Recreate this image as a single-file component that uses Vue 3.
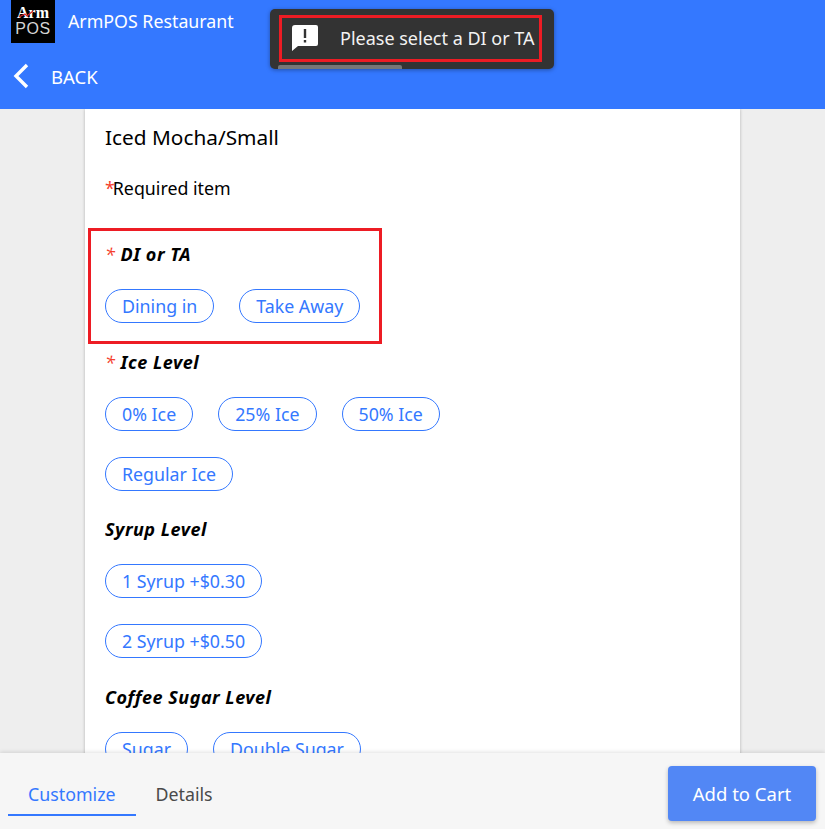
<script setup>
const groups = [
  { name: "DI or TA", required: true, options: ["Dining in", "Take Away"] },
  { name: "Ice Level", required: true, options: ["0% Ice", "25% Ice", "50% Ice", "Regular Ice"] },
  { name: "Syrup Level", required: false, options: ["1 Syrup +$0.30", "2 Syrup +$0.50"] },
  { name: "Coffee Sugar Level", required: false, options: ["Sugar", "Double Sugar"] },
];
</script>

<template>
  <div class="page">
    <header class="topbar">
      <div class="brand">
        <div class="logo">
          <span class="logo-arm">Arm</span>
          <span class="logo-pos">POS</span>
          <svg class="logo-tick" width="16" height="8" viewBox="0 0 16 8" fill="none">
            <path d="M1 7 L7 4 L9 6 L15 1" stroke="#d8232a" stroke-width="1.2" />
          </svg>
        </div>
        <span class="brand-name">ArmPOS Restaurant</span>
      </div>
      <div class="back">
        <svg width="18" height="26" viewBox="0 0 18 26" fill="none">
          <path d="M15 2 L4 13 L15 24" stroke="#fff" stroke-width="3.4" />
        </svg>
        <span>BACK</span>
      </div>
    </header>

    <main class="body">
      <section class="card">
        <h1 class="item-name">Iced Mocha/Small</h1>
        <p class="required-note"><span class="star">*</span>Required item</p>
        <div v-for="group in groups" :key="group.name" class="group">
          <h2 class="group-title">
            <span v-if="group.required" class="star">* </span>{{ group.name }}
          </h2>
          <div class="chips">
            <span v-for="opt in group.options" :key="opt" class="chip">{{ opt }}</span>
          </div>
        </div>
      </section>
    </main>

    <footer class="bottom">
      <div class="tabs">
        <span class="tab active">Customize</span>
        <span class="tab">Details</span>
      </div>
      <button class="add">Add to Cart</button>
    </footer>

    <div class="toast">
      <svg class="toast-icon" width="28" height="28" viewBox="0 0 28 28">
        <path
          d="M4 1 H25 A2 2 0 0 1 27 3 V20 A2 2 0 0 1 25 22 H7 L1 27 V4 A3 3 0 0 1 4 1 Z M12.8 5 V14 H15.2 V5 Z M12.8 16 V18.4 H15.2 V16 Z"
          fill="#fff"
          fill-rule="evenodd"
        />
      </svg>
      <span class="toast-text">Please select a DI or TA</span>
      <div class="toast-progress"></div>
      <div class="mark mark-toast"></div>
    </div>
    <div class="mark mark-group"></div>
  </div>
</template>

<style scoped>
.page {
  position: relative;
  display: flex;
  flex-direction: column;
  height: 829px;
  overflow: hidden;
  background: #eeeeee;
  font-family: "Noto Sans", "Open Sans", sans-serif;
}
.topbar {
  flex: none;
  height: 109px;
  background: #3478ff;
  color: #fff;
}
.brand {
  display: flex;
  align-items: flex-start;
  padding-left: 11px;
}
.logo {
  position: relative;
  width: 44px;
  height: 43px;
  background: #000;
  display: flex;
  flex-direction: column;
  align-items: center;
  gap: 3px;
  line-height: 13px;
  padding-top: 6px;
  box-sizing: border-box;
}
.logo-tick {
  position: absolute;
  left: 7px;
  top: 10px;
}
.logo-arm {
  font-family: "Liberation Serif", serif;
  font-weight: 700;
  font-size: 16px;
  color: #fff;
}
.logo-pos {
  font-family: "Liberation Sans", sans-serif;
  font-size: 16px;
  letter-spacing: 0.5px;
  color: #d4d4d4;
}
.brand-name {
  margin-left: 13px;
  font-size: 17.8px;
  line-height: 43px;
}
.back {
  display: flex;
  align-items: center;
  height: 26px;
  margin-top: 20px;
  padding-left: 12px;
  gap: 21px;
  font-size: 18.5px;
}
.body {
  flex: 1;
  min-height: 0;
  overflow: hidden;
  padding: 0 85px;
}
.card {
  height: 100%;
  background: #fff;
  padding: 14px 20px 0;
  box-shadow: 0 0 3px rgba(0, 0, 0, 0.25);
}
.item-name {
  margin: 0;
  font-size: 20.8px;
  font-weight: 400;
  line-height: 28px;
  color: #000;
}
.required-note {
  margin: 25px 0 0;
  font-size: 17.8px;
  line-height: 24px;
  color: #000;
}
.required-note .star {
  letter-spacing: -2px;
}
.star {
  color: #f5402c;
  font-weight: 400;
}
.group {
  margin-top: 26.5px;
}
.required-note + .group {
  margin-top: 42.25px;
}
.group-title {
  margin: 0;
  font-size: 18px;
  font-weight: 700;
  font-style: italic;
  line-height: 24px;
  letter-spacing: 0.5px;
  color: #000;
}
.chips {
  display: flex;
  flex-wrap: wrap;
  gap: 26px 25px;
  max-width: 337px;
  margin-top: 23px;
}
.chip {
  height: 34px;
  box-sizing: border-box;
  padding: 0 16px;
  border: 1px solid #3478ff;
  border-radius: 17px;
  font-size: 17.8px;
  line-height: 32px;
  color: #3478ff;
  white-space: nowrap;
}
.bottom {
  flex: none;
  display: flex;
  justify-content: space-between;
  height: 76px;
  background: #f6f6f6;
  box-shadow: 0 -1px 4px rgba(0, 0, 0, 0.12);
  position: relative;
}
.tabs {
  display: flex;
  padding: 21px 0 0 8px;
}
.tab {
  height: 42px;
  box-sizing: border-box;
  padding: 0 20px;
  font-size: 17.8px;
  line-height: 40px;
  color: #4a4a4a;
}
.tab.active {
  color: #3478ff;
  border-bottom: 2px solid #3478ff;
}
.add {
  width: 148px;
  height: 55px;
  margin: 13px 9px 0 0;
  border: none;
  border-radius: 4px;
  background: #5287f5;
  color: #fff;
  font-family: inherit;
  font-size: 18.5px;
  box-shadow: 0 2px 4px rgba(0, 0, 0, 0.25);
}
.toast {
  position: absolute;
  left: 270px;
  top: 9px;
  width: 284px;
  height: 60px;
  box-sizing: border-box;
  display: flex;
  align-items: center;
  padding-bottom: 2px;
  background: #333;
  border-radius: 5px;
  box-shadow: 0 1px 4px rgba(0, 0, 0, 0.35);
  color: #f2f2f2;
}
.toast-icon {
  margin-left: 21px;
  flex: none;
}
.toast-text {
  margin-left: 21px;
  font-size: 18px;
  white-space: nowrap;
}
.toast-progress {
  position: absolute;
  left: 8px;
  bottom: 0;
  width: 124px;
  height: 4px;
  background: #777;
  border-radius: 2px 2px 0 0;
}
.mark {
  position: absolute;
  box-sizing: border-box;
  border: 3px solid #ed1c24;
}
.mark-toast {
  left: 9px;
  top: 6px;
  width: 263px;
  height: 47px;
}
.mark-group {
  left: 88px;
  top: 228px;
  width: 294px;
  height: 116px;
}
</style>
